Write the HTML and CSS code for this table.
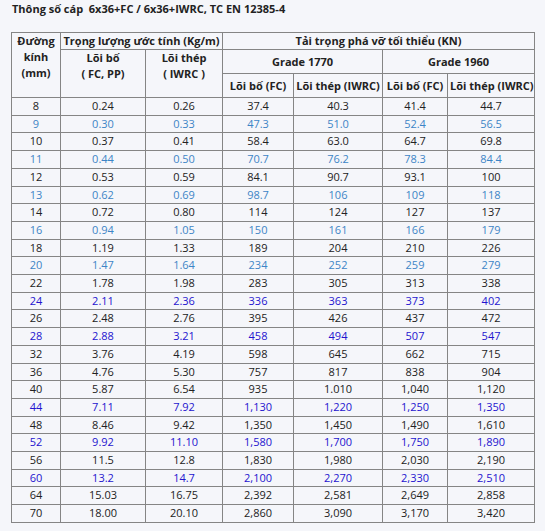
FILE: index.html
```html
<!DOCTYPE html>
<html lang="vi">
<head>
  <meta charset="utf-8" />
  <title>Thông số cáp 6x36</title>
  <link rel="stylesheet" href="styles.css">
</head>
<body>
  <div id="main-body">
    <h4 class="spec-title">Thông số cáp&nbsp; 6x36+FC / 6x36+IWRC, TC EN 12385-4</h4>

    <table class="spec">
      <colgroup>
        <col class="c-dia" />
        <col class="c-w1" />
        <col class="c-w2" />
        <col class="c-g1" />
        <col class="c-g2" />
        <col class="c-g3" />
        <col class="c-g4" />
      </colgroup>
      <thead>
        <tr class="h1">
          <th rowspan="3" class="top">Đường<br />kính<br />(mm)</th>
          <th colspan="2">Trọng lượng ước tính (Kg/m)</th>
          <th colspan="4">Tải trọng phá vỡ tối thiểu (KN)</th>
        </tr>
        <tr class="h2">
          <th rowspan="2" class="top">Lõi bố<br />( FC, PP)</th>
          <th rowspan="2" class="top">Lõi thép<br />( IWRC )</th>
          <th colspan="2">Grade 1770</th>
          <th colspan="2">Grade 1960</th>
        </tr>
        <tr class="h3">
          <th>Lõi bố (FC)</th>
          <th>Lõi thép (IWRC)</th>
          <th>Lõi bố (FC)</th>
          <th>Lõi thép (IWRC)</th>
        </tr>
      </thead>
      <tbody>
        <tr><td>8</td><td>0.24</td><td>0.26</td><td>37.4</td><td>40.3</td><td>41.4</td><td>44.7</td></tr>
        <tr class="lb"><td>9</td><td>0.30</td><td>0.33</td><td>47.3</td><td>51.0</td><td>52.4</td><td>56.5</td></tr>
        <tr><td>10</td><td>0.37</td><td>0.41</td><td>58.4</td><td>63.0</td><td>64.7</td><td>69.8</td></tr>
        <tr class="lb"><td>11</td><td>0.44</td><td>0.50</td><td>70.7</td><td>76.2</td><td>78.3</td><td>84.4</td></tr>
        <tr><td>12</td><td>0.53</td><td>0.59</td><td>84.1</td><td>90.7</td><td>93.1</td><td>100</td></tr>
        <tr class="lb"><td>13</td><td>0.62</td><td>0.69</td><td>98.7</td><td>106</td><td>109</td><td>118</td></tr>
        <tr><td>14</td><td>0.72</td><td>0.80</td><td>114</td><td>124</td><td>127</td><td>137</td></tr>
        <tr class="lb"><td>16</td><td>0.94</td><td>1.05</td><td>150</td><td>161</td><td>166</td><td>179</td></tr>
        <tr><td>18</td><td>1.19</td><td>1.33</td><td>189</td><td>204</td><td>210</td><td>226</td></tr>
        <tr class="lb"><td>20</td><td>1.47</td><td>1.64</td><td>234</td><td>252</td><td>259</td><td>279</td></tr>
        <tr><td>22</td><td>1.78</td><td>1.98</td><td>283</td><td>305</td><td>313</td><td>338</td></tr>
        <tr class="db"><td>24</td><td>2.11</td><td>2.36</td><td>336</td><td>363</td><td>373</td><td>402</td></tr>
        <tr><td>26</td><td>2.48</td><td>2.76</td><td>395</td><td>426</td><td>437</td><td>472</td></tr>
        <tr class="db"><td>28</td><td>2.88</td><td>3.21</td><td>458</td><td>494</td><td>507</td><td>547</td></tr>
        <tr><td>32</td><td>3.76</td><td>4.19</td><td>598</td><td>645</td><td>662</td><td>715</td></tr>
        <tr><td>36</td><td>4.76</td><td>5.30</td><td>757</td><td>817</td><td>838</td><td>904</td></tr>
        <tr><td>40</td><td>5.87</td><td>6.54</td><td>935</td><td>1.010</td><td>1,040</td><td>1,120</td></tr>
        <tr class="db"><td>44</td><td>7.11</td><td>7.92</td><td>1,130</td><td>1,220</td><td>1,250</td><td>1,350</td></tr>
        <tr><td>48</td><td>8.46</td><td>9.42</td><td>1,350</td><td>1,450</td><td>1,490</td><td>1,610</td></tr>
        <tr class="db"><td>52</td><td>9.92</td><td>11.10</td><td>1,580</td><td>1,700</td><td>1,750</td><td>1,890</td></tr>
        <tr><td>56</td><td>11.5</td><td>12.8</td><td>1,830</td><td>1,980</td><td>2,030</td><td>2,190</td></tr>
        <tr class="db"><td>60</td><td>13.2</td><td>14.7</td><td>2,100</td><td>2,270</td><td>2,330</td><td>2,510</td></tr>
        <tr><td>64</td><td>15.03</td><td>16.75</td><td>2,392</td><td>2,581</td><td>2,649</td><td>2,858</td></tr>
        <tr><td>70</td><td>18.00</td><td>20.10</td><td>2,860</td><td>3,090</td><td>3,170</td><td>3,420</td></tr>
      </tbody>
    </table>
  </div>
</body>
</html>
```

FILE: styles.css
```css
html, body { margin: 0; padding: 0; font-family: "Open Sans", "Noto Sans", Arial, sans-serif; font-size: 11px; color: #222; }
body { background: #f5f6fa; }
#main-body { padding: 1px 11px 8px; }
.spec-title { margin: 0; font-size: 11px; line-height: 16px; font-weight: bold; padding-left: 1px; }

.spec { margin-top: 15px; width: 524px; table-layout: fixed; border-collapse: collapse; border: 1px solid #858585; }
.spec th, .spec td { border: 1px solid #858585; text-align: center; padding: 0 2px; white-space: nowrap; }
.spec th { font-weight: bold; line-height: 16px; vertical-align: middle; }
.spec th.top { vertical-align: top; padding-top: 0; }
.spec td { line-height: 16.7px; }

.c-dia { width: 49px; }
.c-w1 { width: 85px; }
.c-w2 { width: 77px; }
.c-g1 { width: 71px; }
.c-g2 { width: 89px; }
.c-g3 { width: 65px; }
.c-g4 { width: 87px; }

.h1 th { height: 15px; }
.h2 th { height: 23px; }
.h3 th { height: 23px; }

.lb td { color: #3d85c6; }
.db td { color: #2414cf; }
```
